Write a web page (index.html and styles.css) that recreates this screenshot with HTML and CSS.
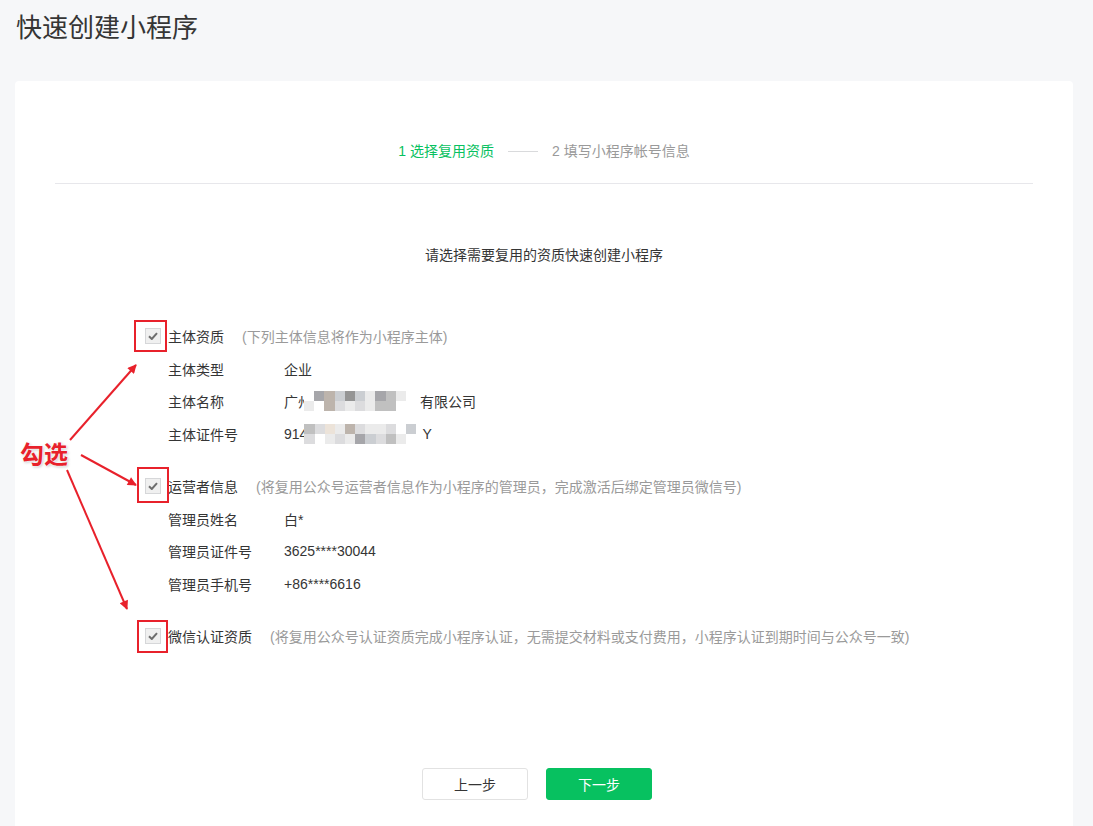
FILE: index.html
```html
<!DOCTYPE html>
<html lang="zh-CN">

<head>
    <meta charset="UTF-8">
    <meta name="viewport" content="width=device-width, initial-scale=1.0">
    <title>快速创建小程序</title>
    <link rel="stylesheet" href="styles.css">
</head>

<body>
    <div class="page">
        <h1 class="page-title">快速创建小程序</h1>

        <div class="card">
            <div class="steps">
                <span class="step active">1 选择复用资质</span>
                <span class="step-line"></span>
                <span class="step">2 填写小程序帐号信息</span>
            </div>

            <p class="lead">请选择需要复用的资质快速创建小程序</p>

            <div class="quals">
                <!-- 主体资质 -->
                <div class="qual">
                    <label class="qual-head">
                        <span class="checkbox"><svg width="10" height="8" viewBox="0 0 10 8"><path d="M1 4.2 L3.8 7 L9 1.2" /></svg></span>
                        <span class="qual-name">主体资质</span>
                        <span class="qual-tip">(下列主体信息将作为小程序主体)</span>
                    </label>
                    <div class="info-row"><span class="info-label">主体类型</span><span class="info-value">企业</span></div>
                    <div class="info-row">
                        <span class="info-label">主体名称</span>
                        <span class="info-value">广州<span class="mosaic mosaic-name">
                            <i class="c0"></i><i class="c6"></i><i class="c4"></i><i class="c3"></i><i class="c7"></i><i class="c3"></i><i class="c1"></i><i class="c6"></i><i class="c5"></i><i class="c1"></i><i class="c0"></i>
                            <i class="c1"></i><i class="c0"></i><i class="c4"></i><i class="c2"></i><i class="c1"></i><i class="c2"></i><i class="c1"></i><i class="c5"></i><i class="c5"></i><i class="c0"></i><i class="c0"></i>
                        </span>有限公司</span>
                    </div>
                    <div class="info-row">
                        <span class="info-label">主体证件号</span>
                        <span class="info-value">914<span class="mosaic mosaic-code">
                            <i class="c5"></i><i class="c2"></i><i class="c8"></i><i class="c1"></i><i class="c4"></i><i class="c2"></i><i class="c1"></i><i class="c1"></i><i class="c2"></i><i class="c0"></i><i class="c3"></i>
                            <i class="c2"></i><i class="c0"></i><i class="c1"></i><i class="c2"></i><i class="c1"></i><i class="c6"></i><i class="c3"></i><i class="c2"></i><i class="c5"></i><i class="c1"></i><i class="c0"></i>
                        </span>Y</span>
                    </div>
                </div>

                <!-- 运营者信息 -->
                <div class="qual">
                    <label class="qual-head">
                        <span class="checkbox"><svg width="10" height="8" viewBox="0 0 10 8"><path d="M1 4.2 L3.8 7 L9 1.2" /></svg></span>
                        <span class="qual-name">运营者信息</span>
                        <span class="qual-tip">(将复用公众号运营者信息作为小程序的管理员，完成激活后绑定管理员微信号)</span>
                    </label>
                    <div class="info-row"><span class="info-label">管理员姓名</span><span class="info-value">白*</span></div>
                    <div class="info-row"><span class="info-label">管理员证件号</span><span class="info-value">3625****30044</span></div>
                    <div class="info-row"><span class="info-label">管理员手机号</span><span class="info-value">+86****6616</span></div>
                </div>

                <!-- 微信认证资质 -->
                <div class="qual">
                    <label class="qual-head">
                        <span class="checkbox"><svg width="10" height="8" viewBox="0 0 10 8"><path d="M1 4.2 L3.8 7 L9 1.2" /></svg></span>
                        <span class="qual-name">微信认证资质</span>
                        <span class="qual-tip">(将复用公众号认证资质完成小程序认证，无需提交材料或支付费用，小程序认证到期时间与公众号一致)</span>
                    </label>
                </div>
            </div>

            <div class="actions">
                <button class="btn">上一步</button>
                <button class="btn btn-primary">下一步</button>
            </div>
        </div>
    </div>

    <!-- annotation drawn over the screenshot -->
    <svg class="annotate" width="1093" height="826" viewBox="0 0 1093 826">
        <defs>
            <marker id="head" viewBox="0 0 10 10" refX="9" refY="5" markerWidth="11" markerHeight="9" markerUnits="userSpaceOnUse" orient="auto">
                <path d="M0 0 L10 5 L0 10 z" fill="#e8212b" />
            </marker>
        </defs>
        <rect x="135" y="321" width="31" height="30" />
        <rect x="138" y="468" width="30" height="34" />
        <rect x="138" y="621" width="29" height="31" />
        <line x1="70" y1="440" x2="136" y2="365" marker-end="url(#head)" />
        <line x1="81" y1="455" x2="136" y2="485" marker-end="url(#head)" />
        <line x1="67" y1="470" x2="127" y2="609" marker-end="url(#head)" />
    </svg>
    <div class="annotate-label">勾选</div>
</body>

</html>
```

FILE: styles.css
```css
*,
*:before,
*:after {
    box-sizing: border-box;
}

html,
body {
    height: 100%;
}

body {
    margin: 0;
    background-color: #f6f7f9;
    font-family: "Liberation Sans", "Noto Sans CJK SC", sans-serif;
    font-size: 14px;
    color: #353535;
    overflow: hidden;
    position: relative;
}

.page {
    padding: 10px 20px 0 15px;
}

.page-title {
    margin: 0;
    padding-left: 1px;
    font-size: 26px;
    font-weight: normal;
    line-height: 36px;
    color: #353535;
}

.card {
    margin-top: 35px;
    padding: 0 40px 80px 40px;
    background-color: #fff;
    border-radius: 4px;
    min-height: 900px;
}

/* steps */
.steps {
    display: flex;
    justify-content: center;
    align-items: center;
    padding: 60px 0 22px 0;
    border-bottom: 1px solid #e7e7eb;
    line-height: 20px;
}

.step {
    color: #9a9a9a;
}

.step.active {
    color: #07c160;
}

.step-line {
    width: 30px;
    height: 1px;
    margin: 0 14px;
    background-color: #d9dadc;
}

.lead {
    margin: 61px 0 0 0;
    text-align: center;
    line-height: 20px;
}

/* qualifications */
.quals {
    margin: 55px 0 0 90px;
}

.qual {
    margin-bottom: 20px;
}

.qual-head {
    display: flex;
    align-items: center;
    height: 32.5px;
}

.checkbox {
    display: inline-flex;
    align-items: center;
    justify-content: center;
    width: 16px;
    height: 16px;
    margin-right: 7px;
    border: 1px solid #d6d7d9;
    background-color: #f0f0f0;
}

.checkbox path {
    fill: none;
    stroke: #6e6e6e;
    stroke-width: 2;
}

.qual-tip {
    margin-left: 18px;
    color: #9a9a9a;
}

.info-row {
    display: flex;
    align-items: center;
    height: 32.5px;
    padding-left: 23px;
}

.info-label {
    width: 116px;
}

.info-value {
    display: flex;
    align-items: center;
}

.mosaic {
    display: grid;
    grid-template-columns: repeat(11, 10.2px);
    grid-template-rows: 10px 10px;
    background-color: #fff;
    position: relative;
}

.mosaic-name {
    margin: 0 4px 0 -8px;
}

.mosaic-code {
    margin: 0 6px 0 -3px;
}

.mosaic i {
    display: block;
}

.c0 { background-color: #ffffff; }
.c1 { background-color: #ebebeb; }
.c2 { background-color: #dcdcde; }
.c3 { background-color: #cbced2; }
.c4 { background-color: #bdb4ac; }
.c5 { background-color: #c0c0c0; }
.c6 { background-color: #a6a6aa; }
.c7 { background-color: #959595; }
.c8 { background-color: #ece3d9; }

/* buttons */
.actions {
    display: flex;
    justify-content: center;
    gap: 18px;
    margin-top: 115px;
    padding-right: 14px;
}

.btn {
    width: 106px;
    height: 32px;
    border: 1px solid #e2e2e2;
    border-radius: 3px;
    background-color: #fff;
    font-family: inherit;
    font-size: 14px;
    color: #353535;
}

.btn-primary {
    border-color: #07c160;
    background-color: #07c160;
    color: #fff;
}

/* red annotation */
.annotate {
    position: absolute;
    top: 0;
    left: 0;
    pointer-events: none;
}

.annotate rect {
    fill: none;
    stroke: #e8212b;
    stroke-width: 2;
}

.annotate line {
    stroke: #e8212b;
    stroke-width: 2;
}

.annotate-label {
    position: absolute;
    left: 20px;
    top: 441px;
    font-size: 24px;
    font-weight: bold;
    line-height: 28px;
    color: #e8212b;
    text-shadow: 0 0 2px #fff, 0 0 2px #fff, 1px 1px 3px #bbb, -1px -1px 2px #fff;
}
```
